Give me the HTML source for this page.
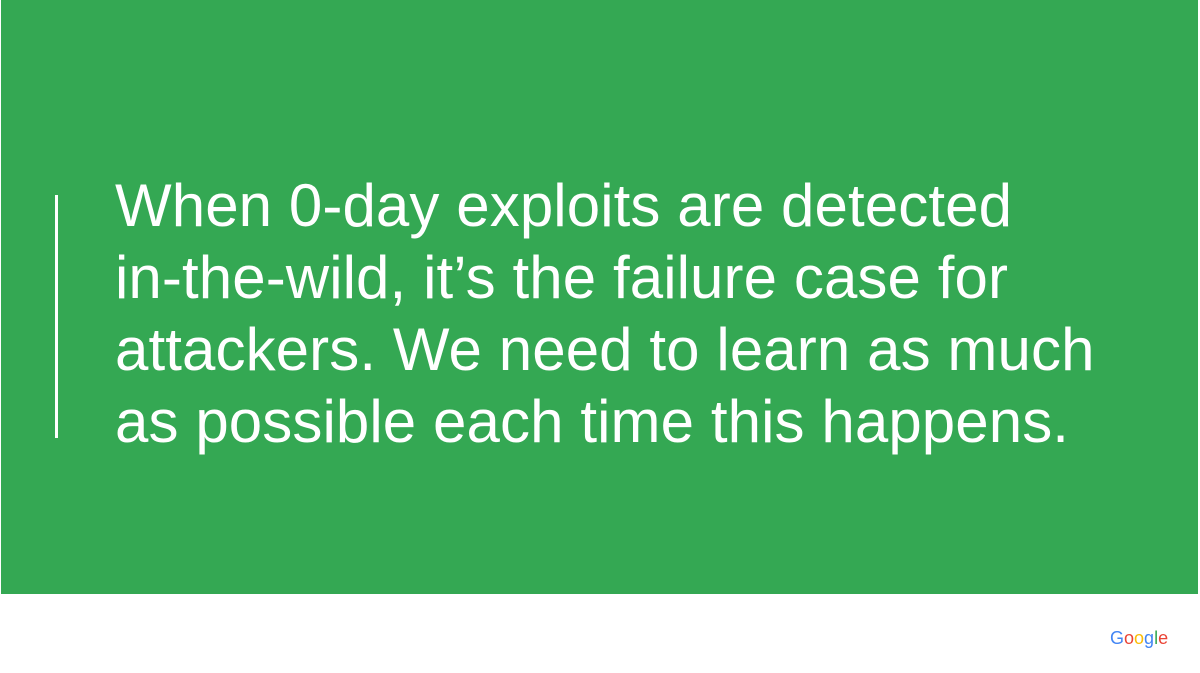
<!DOCTYPE html>
<html><head><style>
html,body{margin:0;padding:0;width:1200px;height:673px;background:#fff;overflow:hidden}
.g{position:absolute;left:1px;top:0;width:1197px;height:594px;background:#34a853}
.bar{position:absolute;left:55px;top:195px;width:3px;height:243px;background:#fff}
.t{position:absolute;left:115px;top:170px;color:#fff;font-family:"Liberation Sans",sans-serif;font-size:60px;line-height:72px;white-space:nowrap;letter-spacing:0.1px}
.logo{position:absolute;left:1110px;top:628px;font-family:"Liberation Sans",sans-serif;font-size:18px}
</style></head><body>
<div class="g"></div>
<div class="bar"></div>
<div class="t">When 0-day exploits are detected<br>in-the-wild, it’s the failure case for<br>attackers. We need to learn as much<br>as possible each time this happens.</div>
<div class="logo"><span style="color:#4285f4">G</span><span style="color:#ea4335">o</span><span style="color:#fbbc05">o</span><span style="color:#4285f4">g</span><span style="color:#34a853">l</span><span style="color:#ea4335">e</span></div>
</body></html>
